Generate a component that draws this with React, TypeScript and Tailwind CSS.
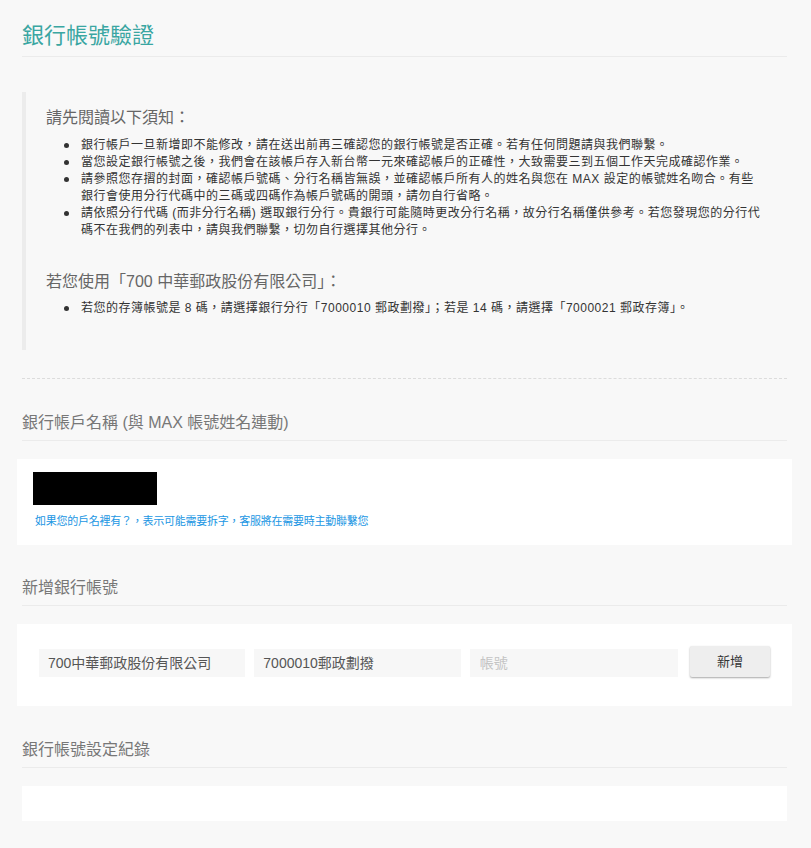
const font = { fontFamily: '"Liberation Sans", "Noto Sans CJK TC", sans-serif' };

function SectionTitle({ children }: { children: React.ReactNode }) {
  return (
    <h2 className="text-[16px] leading-[24px] text-[#777] pb-[5px] border-b border-[#ebebeb]">
      {children}
    </h2>
  );
}

function Item({ children }: { children: React.ReactNode }) {
  return (
    <li className="flex">
      <span className="flex h-[17px] w-[17px] shrink-0 items-center">
        <span className="h-[5px] w-[5px] rounded-full bg-[#333]" />
      </span>
      <span className="flex-1">{children}</span>
    </li>
  );
}

export default function App() {
  return (
    <div className="min-h-[848px] bg-[#f8f8f8] pb-[27px]" style={font}>
      <div className="mx-[22px] w-[765px]">
        <h1 className="pt-[21px] pb-[5px] text-[22px] leading-[30px] text-[#3aa6a2] border-b border-[#ebebeb]">
          銀行帳號驗證
        </h1>

        {/* notice */}
        <div className="mt-[35px] border-l-4 border-[#ececec] pl-[20px] pr-[21px] pt-[14px] pb-[33px]">
          <h3 className="text-[16px] leading-[24px] text-[#666]">請先閱讀以下須知：</h3>
          <ul className="mt-[7px] pl-[18px] text-[12px] leading-[17px] tracking-[0.5px] text-[#333]">
            <Item>銀行帳戶一旦新增即不能修改，請在送出前再三確認您的銀行帳號是否正確。若有任何問題請與我們聯繫。</Item>
            <Item>當您設定銀行帳號之後，我們會在該帳戶存入新台幣一元來確認帳戶的正確性，大致需要三到五個工作天完成確認作業。</Item>
            <Item>請參照您存摺的封面，確認帳戶號碼、分行名稱皆無誤，並確認帳戶所有人的姓名與您在 MAX 設定的帳號姓名吻合。有些銀行會使用分行代碼中的三碼或四碼作為帳戶號碼的開頭，請勿自行省略。</Item>
            <Item>請依照分行代碼 (而非分行名稱) 選取銀行分行。貴銀行可能隨時更改分行名稱，故分行名稱僅供參考。若您發現您的分行代碼不在我們的列表中，請與我們聯繫，切勿自行選擇其他分行。</Item>
          </ul>
          <h3 className="mt-[31px] text-[16px] leading-[24px] text-[#666]">若您使用「700 中華郵政股份有限公司」：</h3>
          <ul className="mt-[6px] pl-[18px] text-[12px] leading-[17px] tracking-[0.5px] text-[#333]">
            <Item>若您的存簿帳號是 8 碼，請選擇銀行分行「7000010 郵政劃撥」；若是 14 碼，請選擇「7000021 郵政存簿」。</Item>
          </ul>
        </div>

        <div className="mt-[28px] border-t border-dashed border-[#dcdcdc]" />

        {/* account name */}
        <div className="mt-[32px]">
          <SectionTitle>銀行帳戶名稱 (與 MAX 帳號姓名連動)</SectionTitle>
        </div>
        <div className="-mx-[5px] mt-[18px] bg-white pl-[16px] pt-[13px] pb-[17px]">
          <div className="h-[33px] w-[124px] bg-black" />
          <p className="mt-[9px] pl-[2px] text-[11px] leading-[14px] tracking-[-0.25px] text-[#2196e3]">
            如果您的戶名裡有？，表示可能需要拆字，客服將在需要時主動聯繫您
          </p>
        </div>

        {/* add account */}
        <div className="mt-[31px]">
          <SectionTitle>新增銀行帳號</SectionTitle>
        </div>
        <div className="-mx-[5px] mt-[18px] flex items-end bg-white px-[22px] pt-[22px] pb-[29px]">
          <div className="flex flex-1 gap-[9px]">
            <div className="flex h-[28px] flex-1 items-center bg-[#f7f7f7] px-[9px] text-[14px] text-[#555]">
              700中華郵政股份有限公司
            </div>
            <div className="flex h-[28px] flex-1 items-center bg-[#f7f7f7] px-[9px] text-[14px] text-[#555]">
              7000010郵政劃撥
            </div>
            <input
              placeholder="帳號"
              className="h-[28px] min-w-0 flex-1 bg-[#f7f7f7] px-[10px] text-[14px] text-[#555] outline-none placeholder:text-[#c4c4c4]"
            />
          </div>
          <button className="ml-[12px] h-[31px] w-[80px] rounded-[2px] bg-[#eeeeee] text-[13px] text-[#333] shadow-[0_1px_2px_rgba(0,0,0,0.35)]">
            新增
          </button>
        </div>

        {/* history */}
        <div className="mt-[32px]">
          <SectionTitle>銀行帳號設定紀錄</SectionTitle>
        </div>
        <div className="mt-[18px] h-[35px] bg-white" />
      </div>
    </div>
  );
}
